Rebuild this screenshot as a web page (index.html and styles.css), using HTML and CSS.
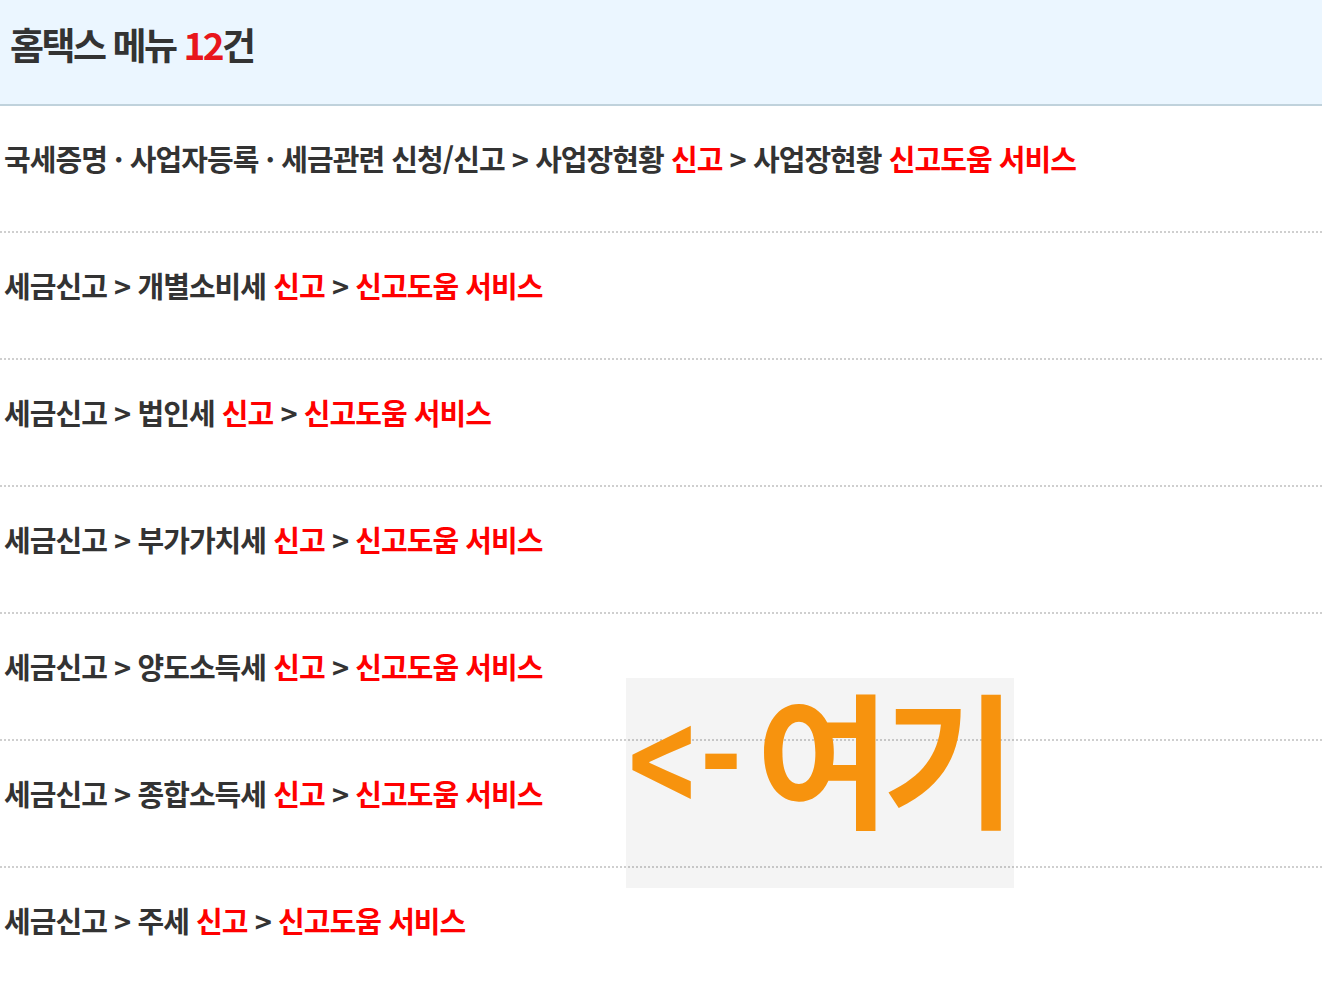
FILE: index.html
```html
<!DOCTYPE html>
<html lang="ko">
  <head>
    <meta charset="utf-8" />
    <title>홈택스 메뉴</title>
    <link rel="stylesheet" href="styles.css">
  </head>
  <body>
    <div class="page">
      <div class="result-head">
        <h1>홈택스 메뉴 <em>12</em>건</h1>
      </div>

      <ul class="menu-list">
        <li>국세증명 · 사업자등록 · 세금관련 신청/신고 &gt; 사업장현황 <span class="hl">신고</span> &gt; 사업장현황 <span class="hl">신고도움 서비스</span></li>
        <li>세금신고 &gt; 개별소비세 <span class="hl">신고</span> &gt; <span class="hl">신고도움 서비스</span></li>
        <li>세금신고 &gt; 법인세 <span class="hl">신고</span> &gt; <span class="hl">신고도움 서비스</span></li>
        <li>세금신고 &gt; 부가가치세 <span class="hl">신고</span> &gt; <span class="hl">신고도움 서비스</span></li>
        <li>세금신고 &gt; 양도소득세 <span class="hl">신고</span> &gt; <span class="hl">신고도움 서비스</span></li>
        <li>세금신고 &gt; 종합소득세 <span class="hl">신고</span> &gt; <span class="hl">신고도움 서비스</span></li>
        <li>세금신고 &gt; 주세 <span class="hl">신고</span> &gt; <span class="hl">신고도움 서비스</span></li>
      </ul>

      <!-- annotation pointing at the row -->
      <div class="pointer"><span class="arrow">&lt;-</span>여기</div>
    </div>
  </body>
</html>
```

FILE: styles.css
```css
body {
  margin: 0;
  background-color: #fff;
  color: #333;
  font-family: "Noto Sans CJK KR", "Noto Sans", sans-serif;
}

.page {
  position: relative;
  width: 1322px;
  overflow: hidden;
}

.result-head {
  height: 104px;
  background-color: #ebf6ff;
  border-bottom: 2px solid #c0d2dc;
  display: flex;
  align-items: flex-start;
  padding: 0 10px;
}

h1 {
  margin: 18px 0 0;
  font-size: 37px;
  line-height: 52px;
  font-weight: 700;
  letter-spacing: -2.5px;
  color: #333;
}

h1 em {
  font-style: normal;
  color: #e8161c;
}

.menu-list {
  list-style: none;
  margin: 0;
  padding: 0;
}

.menu-list li {
  padding: 31px 4px 0;
  height: 94px;
  border-bottom: 2px dotted #cfcfcf;
  font-size: 29px;
  line-height: 42px;
  font-weight: 700;
  letter-spacing: -0.95px;
  color: #333;
}

.hl {
  color: #ff0000;
}

.pointer {
  position: absolute;
  left: 626px;
  top: 678px;
  width: 388px;
  height: 210px;
  box-sizing: border-box;
  padding-left: 2px;
  background-color: rgba(0, 0, 0, 0.045);
  color: #f7930e;
  font-size: 146px;
  line-height: 152px;
  font-weight: 700;
  letter-spacing: -8px;
  white-space: nowrap;
}

.arrow {
  display: inline-block;
  width: 128px;
  letter-spacing: 6px;
  transform: scaleX(0.78);
  transform-origin: left center;
}
```
